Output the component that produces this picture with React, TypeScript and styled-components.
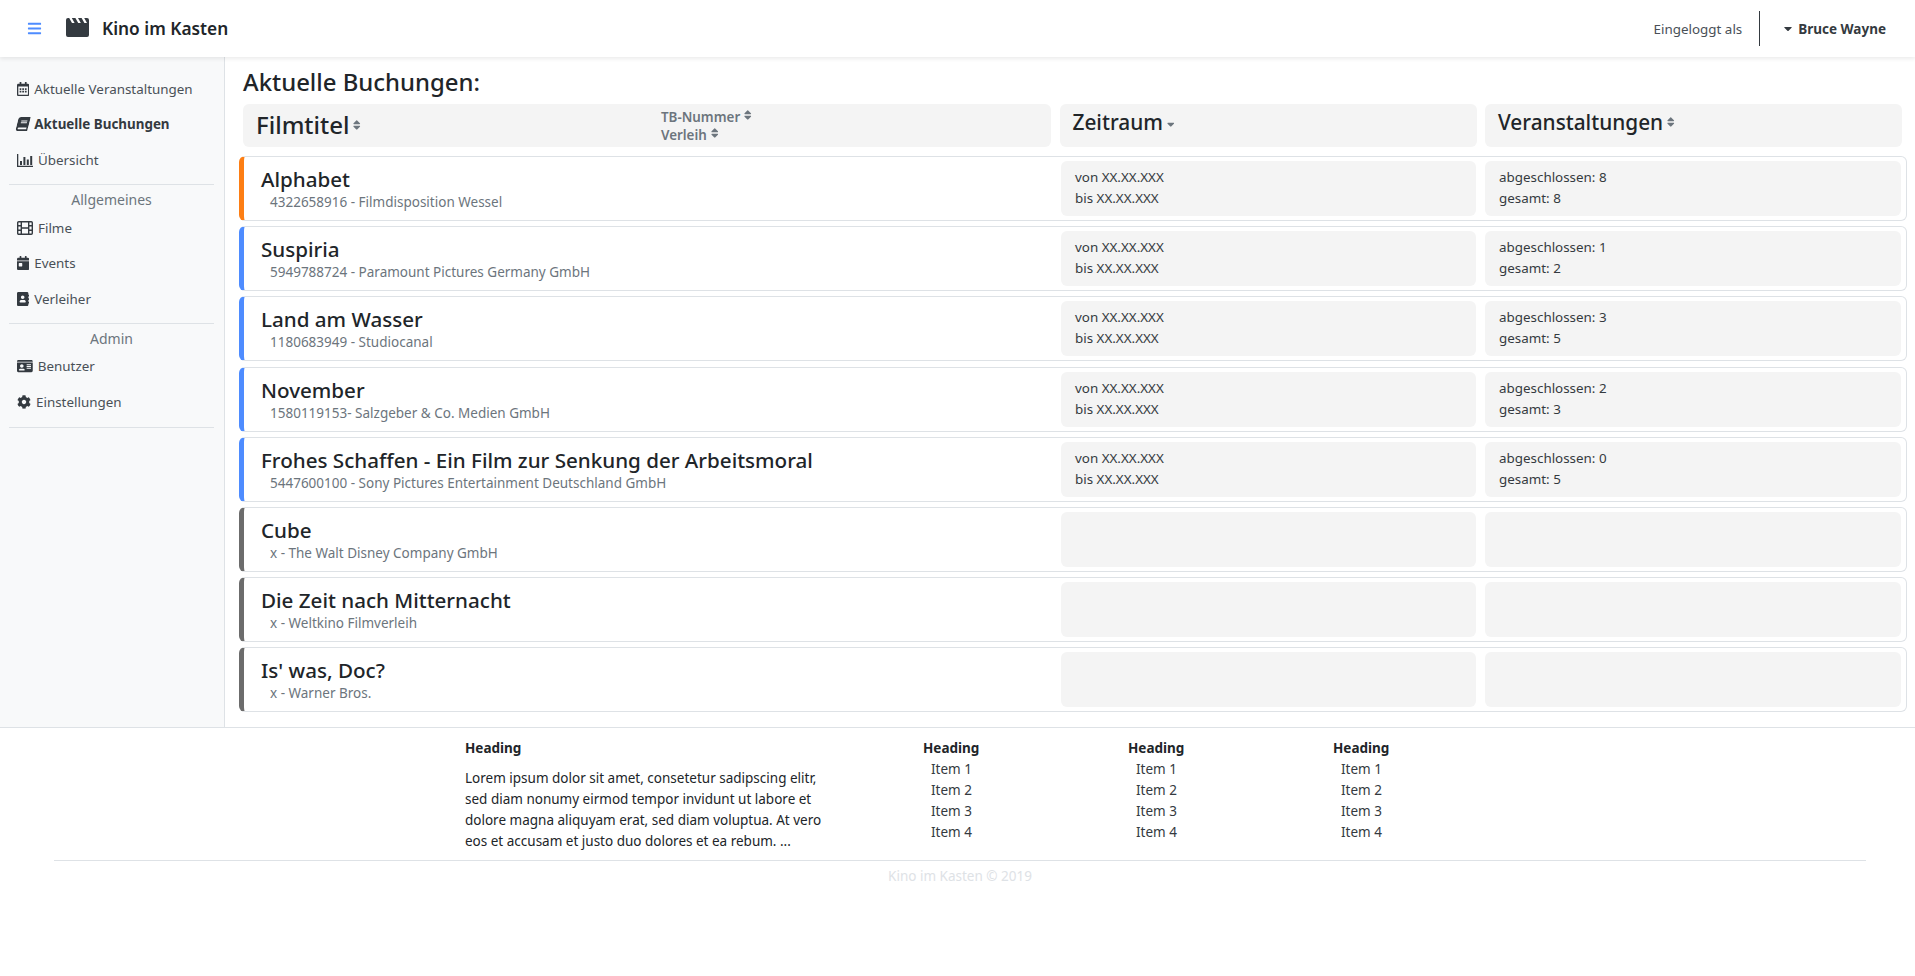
import React from 'react';
import styled, { createGlobalStyle } from 'styled-components';
import {
  FaAddressBook,
  FaBars,
  FaBook,
  FaCalendarDay,
  FaCaretDown,
  FaCog,
  FaIdCard,
  FaRegCalendarAlt,
  FaSort,
  FaSortDown,
} from 'react-icons/fa';

const GlobalStyle = createGlobalStyle`
  html, body {
    margin: 0;
    padding: 0;
    background: #fff;
    color: #212529;
    font-family: "Noto Sans", "Open Sans", sans-serif;
    font-size: 13.5px;
  }
  * { box-sizing: border-box; }
`;

const Page = styled.div`
  width: 1915px;
  min-height: 976px;
  display: flex;
  flex-direction: column;
`;

const TopBar = styled.header`
  height: 57px;
  display: flex;
  align-items: center;
  padding: 0 29px 0 27px;
  background: #fff;
  box-shadow: 0 2px 4px rgba(0, 0, 0, 0.08);
  position: relative;
  z-index: 2;
`;

const Burger = styled.span`
  display: flex;
  color: #4e8cff;
  font-size: 15px;
  margin-right: 24px;
`;

const Brand = styled.span`
  display: flex;
  align-items: center;
  gap: 13px;
  font-size: 17.3px;
  font-weight: 600;
  color: #212529;
`;

const LogoIcon = styled.svg`
  width: 23px;
  height: 19px;
  margin-top: -3px;
  fill: #343a40;
`;

const UserArea = styled.div`
  margin-left: auto;
  display: flex;
  align-items: center;
`;

const LoggedIn = styled.span`
  color: #495057;
  padding-right: 17px;
  font-size: 13.4px;
`;

const Separator = styled.span`
  width: 1px;
  height: 35px;
  background: #343a40;
  margin-right: 24px;
`;

const UserName = styled.span`
  display: flex;
  align-items: center;
  gap: 6px;
  font-weight: 700;
  color: #343a40;
  font-size: 13.5px;
`;

const UserCaret = styled(FaCaretDown)`
  width: 8px;
  height: 13px;
`;

const Body = styled.div`
  display: flex;
  height: 670px;
`;

const Sidebar = styled.nav`
  width: 225px;
  flex-shrink: 0;
  background: #f8f9fa;
  border-right: 1px solid #dee2e6;
  padding: 14px 10px 0 9px;
`;

const NavItem = styled.div<{ $active?: boolean }>`
  height: 35.6px;
  display: flex;
  align-items: center;
  gap: 5px;
  padding-left: 8px;
  color: #495057;
  font-size: 13.4px;
  font-weight: ${({ $active }) => ($active ? 700 : 400)};
  ${({ $active }) => $active && 'color: #343a40;'}
  svg { height: 14px; color: #343a40; flex-shrink: 0; }
`;

const CalendarIcon = styled(FaRegCalendarAlt)`
  width: 12.25px;
`;

const BookIcon = styled(FaBook)`
  width: 12.25px;
  transform: skewX(-14deg);
`;

const EventIcon = styled(FaCalendarDay)`
  width: 12.25px;
`;

const ContactIcon = styled(FaAddressBook)`
  width: 12.25px;
`;

const CardIcon = styled(FaIdCard)`
  width: 15.75px;
`;

const GearIcon = styled(FaCog)`
  width: 14px;
`;

const NavTitle = styled.div`
  border-top: 1px solid #dee2e6;
  margin-top: 6px;
  padding-top: 6px;
  height: 26px;
  text-align: center;
  font-size: 14px;
  color: #6c757d;
  line-height: 18px;
`;

const NavRule = styled.div`
  border-top: 1px solid #dee2e6;
  margin-top: 7px;
`;

const Content = styled.main`
  flex: 1;
  padding: 9px 13px 0 14px;
`;

const PageTitle = styled.h1`
  margin: 0 0 6px 4px;
  font-size: 23.9px;
  font-weight: 500;
  line-height: 32px;
  color: #212529;
`;

const Columns = styled.div`
  display: grid;
  grid-template-columns: 808px 417px 417px;
  column-gap: 8.5px;
  margin-left: 4px;
`;

const HeaderCell = styled.div`
  height: 43px;
  background: #f4f4f4;
  border-radius: 6px;
  padding-left: 13px;
  display: flex;
  align-items: flex-start;
`;

const HeaderTitle = styled.span<{ $big?: boolean }>`
  display: inline-flex;
  align-items: center;
  gap: 4px;
  font-size: ${({ $big }) => ($big ? '24px' : '20.8px')};
  font-weight: 500;
  line-height: ${({ $big }) => ($big ? '42px' : '36px')};
  color: #212529;
  svg { height: 12px; width: 7.5px; color: #6c757d; }
`;

const SubSort = styled.div`
  margin-left: 300px;
  padding-top: 5px;
`;

const SubSortLine = styled.div`
  display: flex;
  align-items: flex-start;
  gap: 4px;
  height: 17px;
  margin-bottom: 0.5px;
  font-size: 13.4px;
  font-weight: 600;
  line-height: 17px;
  color: #6c757d;
  svg { height: 12px; width: 7.5px; margin-top: 0; }
`;

const List = styled.div`
  display: flex;
  flex-direction: column;
  gap: 5.2px;
  margin-top: 9px;
`;

const Card = styled.div<{ $accent: string }>`
  height: 65px;
  display: grid;
  grid-template-columns: 808px 415px 416px;
  column-gap: 9px;
  align-items: stretch;
  padding: 4px 5px 4px 0;
  background: #fff;
  border: 1px solid #dee2e6;
  border-left: 5px solid ${({ $accent }) => $accent};
  border-radius: 6px;
`;

const FilmInfo = styled.div`
  padding: 4px 0 0 17px;
`;

const FilmTitle = styled.div`
  font-size: 20.6px;
  font-weight: 500;
  line-height: 29px;
  color: #212529;
`;

const FilmMeta = styled.div`
  padding-left: 9px;
  font-size: 13.5px;
  line-height: 17px;
  color: #6c757d;
`;

const InfoCell = styled.div`
  background: #f4f4f4;
  border-radius: 6px;
  padding: 6px 14px;
  font-size: 13.4px;
  line-height: 21px;
  color: #343a40;
`;

const Footer = styled.footer`
  border-top: 1px solid #dee2e6;
  padding-top: 10px;
`;

const FooterColumns = styled.div`
  display: flex;
  padding-left: 465px;
  height: 122px;
`;

const FooterText = styled.div`
  width: 366px;
  margin-right: 92px;
  font-size: 13.5px;
  line-height: 21px;
  color: #212529;
`;

const FooterHeading = styled.div`
  font-weight: 700;
  font-size: 13.5px;
  line-height: 21px;
  margin-bottom: 9px;
`;

const FooterList = styled.div`
  width: 205px;
  font-size: 13.5px;
  line-height: 21px;
  color: #343a40;
  padding-left: 8px;
`;

const FooterListHeading = styled.div`
  font-weight: 700;
  color: #212529;
  margin-left: -8px;
`;

const Copyright = styled.div`
  margin: 0 49px 0 54px;
  border-top: 1px solid #dee2e6;
  padding-top: 5px;
  text-align: center;
  font-size: 13.5px;
  line-height: 20px;
  color: #dee2e6;
`;

const ChartIcon: React.FC = () => (
  <svg width="16" viewBox="0 0 16 14" fill="currentColor">
    <path d="M0 1h1.3v11.7H16V14H0z" />
    <path d="M3 8h2v4H3zM6.4 4h2v8h-2zM9.8 6.5h2V12h-2zM13.2 3h2v9h-2z" />
  </svg>
);

const FilmIcon: React.FC = () => (
  <svg width="16" viewBox="0 0 16 14" fill="none" stroke="currentColor" strokeWidth="1.4">
    <rect x="0.7" y="0.7" width="14.6" height="12.6" rx="1" />
    <path d="M4.3 0.7v12.6M11.7 0.7v12.6M0.7 4.8h3.6M0.7 9.2h3.6M11.7 4.8h3.6M11.7 9.2h3.6M4.3 7h7.4" />
  </svg>
);

const films = [
  { title: 'Alphabet', meta: '4322658916 - Filmdisposition Wessel', accent: '#fd7e14', done: 8, total: 8 },
  { title: 'Suspiria', meta: '5949788724 - Paramount Pictures Germany GmbH', accent: '#4e8cff', done: 1, total: 2 },
  { title: 'Land am Wasser', meta: '1180683949 - Studiocanal', accent: '#4e8cff', done: 3, total: 5 },
  { title: 'November', meta: '1580119153- Salzgeber & Co. Medien GmbH', accent: '#4e8cff', done: 2, total: 3 },
  {
    title: 'Frohes Schaffen - Ein Film zur Senkung der Arbeitsmoral',
    meta: '5447600100 - Sony Pictures Entertainment Deutschland GmbH',
    accent: '#4e8cff',
    done: 0,
    total: 5,
  },
  { title: 'Cube', meta: 'x - The Walt Disney Company GmbH', accent: '#6c6c6c' },
  { title: 'Die Zeit nach Mitternacht', meta: 'x - Weltkino Filmverleih', accent: '#6c6c6c' },
  { title: "Is' was, Doc?", meta: 'x - Warner Bros.', accent: '#6c6c6c' },
];

const App: React.FC = () => (
  <Page>
    <GlobalStyle />
    <TopBar>
      <Burger>
        <FaBars />
      </Burger>
      <Brand>
        <LogoIcon viewBox="0 0 23 19">
          <path d="M0 2 Q0 0 2 0 H3.2 L6 5 H8.6 L5.8 0 H9.4 L12.2 5 H14.8 L12 0 H15.6 L18.4 5 H21 L18.2 0 H21 Q23 0 23 2 V17 Q23 19 21 19 H2 Q0 19 0 17 Z" />
        </LogoIcon>
        Kino im Kasten
      </Brand>
      <UserArea>
        <LoggedIn>Eingeloggt als</LoggedIn>
        <Separator />
        <UserName>
          <UserCaret />
          Bruce Wayne
        </UserName>
      </UserArea>
    </TopBar>
    <Body>
      <Sidebar>
        <NavItem>
          <CalendarIcon />
          Aktuelle Veranstaltungen
        </NavItem>
        <NavItem $active>
          <BookIcon />
          Aktuelle Buchungen
        </NavItem>
        <NavItem>
          <ChartIcon />
          Übersicht
        </NavItem>
        <NavTitle>Allgemeines</NavTitle>
        <NavItem>
          <FilmIcon />
          Filme
        </NavItem>
        <NavItem>
          <EventIcon />
          Events
        </NavItem>
        <NavItem>
          <ContactIcon />
          Verleiher
        </NavItem>
        <NavTitle>Admin</NavTitle>
        <NavItem>
          <CardIcon />
          Benutzer
        </NavItem>
        <NavItem>
          <GearIcon />
          Einstellungen
        </NavItem>
        <NavRule />
      </Sidebar>
      <Content>
        <PageTitle>Aktuelle Buchungen:</PageTitle>
        <Columns>
          <HeaderCell>
            <HeaderTitle $big>
              Filmtitel
              <FaSort />
            </HeaderTitle>
            <SubSort>
              <SubSortLine>
                TB-Nummer
                <FaSort />
              </SubSortLine>
              <SubSortLine>
                Verleih
                <FaSort />
              </SubSortLine>
            </SubSort>
          </HeaderCell>
          <HeaderCell>
            <HeaderTitle>
              Zeitraum
              <FaSortDown />
            </HeaderTitle>
          </HeaderCell>
          <HeaderCell>
            <HeaderTitle>
              Veranstaltungen
              <FaSort />
            </HeaderTitle>
          </HeaderCell>
        </Columns>
        <List>
          {films.map((film) => (
            <Card key={film.title} $accent={film.accent}>
              <FilmInfo>
                <FilmTitle>{film.title}</FilmTitle>
                <FilmMeta>{film.meta}</FilmMeta>
              </FilmInfo>
              <InfoCell>
                {film.total !== undefined && (
                  <>
                    von XX.XX.XXX
                    <br />
                    bis XX.XX.XXX
                  </>
                )}
              </InfoCell>
              <InfoCell>
                {film.total !== undefined && (
                  <>
                    abgeschlossen: {film.done}
                    <br />
                    gesamt: {film.total}
                  </>
                )}
              </InfoCell>
            </Card>
          ))}
        </List>
      </Content>
    </Body>
    <Footer>
      <FooterColumns>
        <FooterText>
          <FooterHeading>Heading</FooterHeading>
          Lorem ipsum dolor sit amet, consetetur sadipscing elitr, sed diam nonumy eirmod tempor invidunt ut labore et
          dolore magna aliquyam erat, sed diam voluptua. At vero eos et accusam et justo duo dolores et ea rebum. ...
        </FooterText>
        {[0, 1, 2].map((column) => (
          <FooterList key={column}>
            <FooterListHeading>Heading</FooterListHeading>
            <div>Item 1</div>
            <div>Item 2</div>
            <div>Item 3</div>
            <div>Item 4</div>
          </FooterList>
        ))}
      </FooterColumns>
      <Copyright>Kino im Kasten © 2019</Copyright>
    </Footer>
  </Page>
);

export default App;
